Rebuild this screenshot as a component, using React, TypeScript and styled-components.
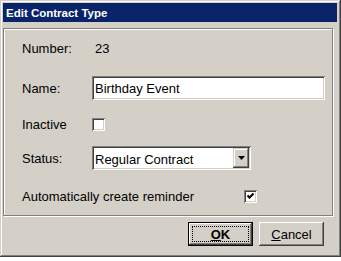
import { useState } from "react";
import styled, { createGlobalStyle } from "styled-components";

const Global = createGlobalStyle`
  body {
    margin: 0;
    background: #fff;
    font-family: "Liberation Sans", Arial, sans-serif;
  }
`;

const Window = styled.div`
  width: 341px;
  height: 257px;
  box-sizing: border-box;
  background: #d4d0c8;
  padding: 3px 4px 4px 3px;
  display: flex;
  flex-direction: column;
  box-shadow: inset -1px -1px #404040, inset 1px 1px #d4d0c8,
    inset -2px -2px #808080, inset 2px 2px #fff;
`;

const TitleBar = styled.div`
  height: 19px;
  flex: none;
  background: #0a246a;
  color: #fff;
  font-weight: bold;
  font-size: 11.5px;
  display: flex;
  align-items: center;
  padding-left: 3px;
`;

const Panel = styled.div`
  margin: 6px 4px 0 0;
  height: 188px;
  box-sizing: border-box;
  border: 1px solid #808080;
  box-shadow: inset 1px 1px 0 #fff, 1px 1px 0 #fff;
  padding: 0 0 0 18px;
  display: flex;
  flex-direction: column;
`;

const Row = styled.div<{ $top: number }>`
  height: 24px;
  margin-top: ${(p) => p.$top}px;
  display: flex;
  align-items: center;
  font-size: 13px;
  color: #000;
`;

const Label = styled.span<{ $width?: number }>`
  width: ${(p) => p.$width ?? 70}px;
  flex: none;
`;

const Value = styled.span`
  padding-left: 3px;
`;

const sunken = `
  box-shadow: inset 1px 1px #808080, inset -1px -1px #fff,
    inset 2px 2px #404040, inset -2px -2px #d4d0c8;
`;

const TextInput = styled.input`
  width: 233px;
  height: 24px;
  box-sizing: border-box;
  border: none;
  ${sunken}
  background: #fff;
  font-family: "Liberation Sans", Arial, sans-serif;
  font-size: 13px;
  color: #000;
  padding: 0 3px;
  outline: none;
`;

const Check = styled.span`
  width: 13px;
  height: 13px;
  box-sizing: border-box;
  background: #fff;
  ${sunken}
  display: flex;
  align-items: center;
  justify-content: center;
  flex: none;
`;

const Select = styled.div`
  width: 159px;
  height: 24px;
  box-sizing: border-box;
  background: #fff;
  ${sunken}
  padding: 2px;
  display: flex;
  align-items: center;
`;

const SelectText = styled.span`
  flex: 1;
  padding-left: 1px;
  padding-top: 3px;
`;

const ArrowButton = styled.span`
  width: 16px;
  height: 20px;
  box-sizing: border-box;
  background: #d4d0c8;
  box-shadow: inset -1px -1px #404040, inset 1px 1px #d4d0c8,
    inset -2px -2px #808080, inset 2px 2px #fff;
  display: flex;
  align-items: center;
  justify-content: center;
`;

const Footer = styled.div`
  display: flex;
  justify-content: flex-end;
  gap: 6px;
  padding: 6px 13px 0 0;
`;

const Button = styled.button<{ $default?: boolean }>`
  width: 65px;
  height: 24px;
  box-sizing: border-box;
  background: #d4d0c8;
  border: ${(p) => (p.$default ? "1px solid #000" : "none")};
  box-shadow: inset -1px -1px #404040, inset 1px 1px #fff,
    inset -2px -2px #808080;
  font-family: "Liberation Sans", Arial, sans-serif;
  font-size: 13px;
  font-weight: ${(p) => (p.$default ? "bold" : "normal")};
  color: #000;
  padding: 3px;
  display: flex;
  cursor: pointer;
`;

const Focus = styled.span<{ $show?: boolean }>`
  flex: 1;
  display: flex;
  align-items: center;
  justify-content: center;
  border: 1px dotted ${(p) => (p.$show ? "#000" : "transparent")};
`;

const CheckMark = () => (
  <svg width="7" height="7" viewBox="0 0 7 7">
    <path d="M0.5 2.5 L2.5 4.5 L6.5 0.5" stroke="#000" strokeWidth="2" fill="none" />
  </svg>
);

const DownArrow = () => (
  <svg width="7" height="4" viewBox="0 0 7 4">
    <path d="M0 0 H7 L3.5 4 Z" fill="#000" />
  </svg>
);

export default function App() {
  const [name, setName] = useState("Birthday Event");

  return (
    <>
      <Global />
      <Window>
        <TitleBar>Edit Contract Type</TitleBar>
        <Panel>
          <Row $top={7}>
            <Label>Number:</Label>
            <Value>23</Value>
          </Row>
          <Row $top={16}>
            <Label>Name:</Label>
            <TextInput value={name} onChange={(e) => setName(e.target.value)} />
          </Row>
          <Row $top={12}>
            <Label>Inactive</Label>
            <Check />
          </Row>
          <Row $top={10}>
            <Label>Status:</Label>
            <Select>
              <SelectText>Regular Contract</SelectText>
              <ArrowButton>
                <DownArrow />
              </ArrowButton>
            </Select>
          </Row>
          <Row $top={14}>
            <Label $width={222}>Automatically create reminder</Label>
            <Check>
              <CheckMark />
            </Check>
          </Row>
        </Panel>
        <Footer>
          <Button $default>
            <Focus $show>
              <u>O</u>K
            </Focus>
          </Button>
          <Button>
            <Focus>
              <u>C</u>ancel
            </Focus>
          </Button>
        </Footer>
      </Window>
    </>
  );
}
